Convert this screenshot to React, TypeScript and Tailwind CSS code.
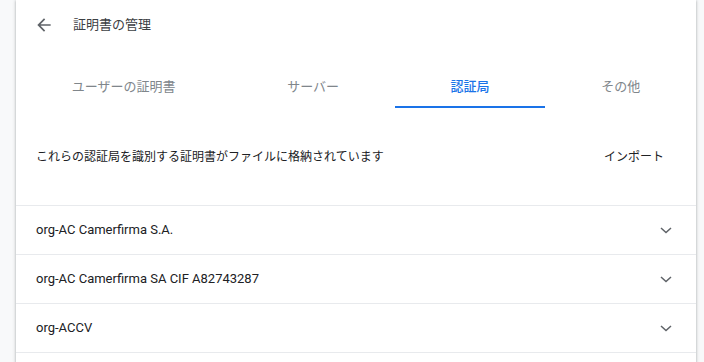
import React from 'react';

const tabs = ['ユーザーの証明書', 'サーバー', '認証局', 'その他'];
const authorities = ['org-AC Camerfirma S.A.', 'org-AC Camerfirma SA CIF A82743287', 'org-ACCV'];

function BackArrow() {
  return (
    <svg width="20" height="20" viewBox="0 0 24 24" className="fill-[#5f6368]">
      <path d="M20 11H7.83l5.59-5.59L12 4l-8 8 8 8 1.41-1.41L7.83 13H20v-2z" />
    </svg>
  );
}

function Chevron() {
  return (
    <svg width="12" height="7" viewBox="0 0 12 7" fill="none" className="stroke-[#5f6368]">
      <polyline points="1,1 6,5.5 11,1" strokeWidth="1.5" />
    </svg>
  );
}

export default function App() {
  return (
    <div className="h-[362px] w-[704px] overflow-hidden bg-[#f8f9fa] pl-4 pr-2 font-['Roboto','Noto_Sans_CJK_JP',sans-serif]">
      <div className="h-full bg-white shadow-[0_1px_2px_0_rgba(60,64,67,0.3),0_1px_3px_1px_rgba(60,64,67,0.15)]">
        <div className="flex h-[50px] items-center gap-[19px] pl-[18px]">
          <BackArrow />
          <span className="text-[13px] text-[#3c4043]">証明書の管理</span>
        </div>

        <div className="mt-[18px] flex h-[40px]">
          {tabs.map((t, i) => {
            const active = i === 2;
            return (
              <div
                key={t}
                className={
                  active
                    ? 'flex flex-auto items-center justify-center border-b-2 border-[#1a73e8] text-[13px] font-medium text-[#1a73e8]'
                    : 'flex flex-auto items-center justify-center border-b-2 border-transparent text-[13px] text-[#80868b]'
                }
              >
                {t}
              </div>
            );
          })}
        </div>

        <div className="flex h-[97px] items-center justify-between pl-5 pr-8">
          <span className="text-[12px] text-[#202124]">これらの認証局を識別する証明書がファイルに格納されています</span>
          <span className="text-[12px] text-[#202124]">インポート</span>
        </div>

        {authorities.map(a => (
          <div key={a} className="flex h-[49px] items-center justify-between border-t border-[#e8eaed] pl-5 pr-6">
            <span className="text-[13px] text-[#202124]">{a}</span>
            <Chevron />
          </div>
        ))}
        <div className="border-t border-[#e8eaed]" />
      </div>
    </div>
  );
}
